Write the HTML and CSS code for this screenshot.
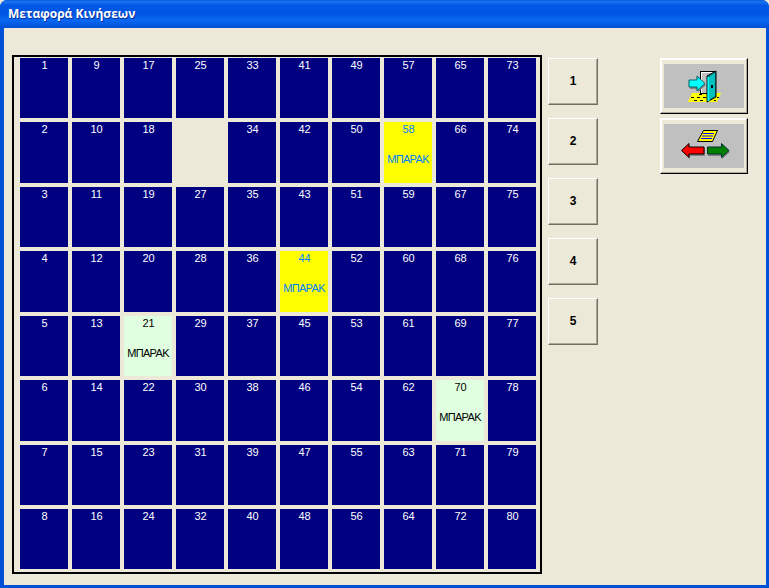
FILE: index.html
```html
<!DOCTYPE html>
<html lang="el">
<head>
    <meta charset="UTF-8">
    <meta name="viewport" content="width=device-width, initial-scale=1.0">
    <title>Μεταφορά Κινήσεων</title>
    <link rel="stylesheet" href="styles.css">
</head>
<body>
    <div class="window">
        <div class="titlebar">Μεταφορά Κινήσεων</div>

        <div class="client">
            <!-- Πλάνο τραπεζιών -->
            <div class="board">
                <div class="cell">1</div><div class="cell">2</div><div class="cell">3</div><div class="cell">4</div>
                <div class="cell">5</div><div class="cell">6</div><div class="cell">7</div><div class="cell">8</div>
                <div class="cell">9</div><div class="cell">10</div><div class="cell">11</div><div class="cell">12</div>
                <div class="cell">13</div><div class="cell">14</div><div class="cell">15</div><div class="cell">16</div>
                <div class="cell">17</div><div class="cell">18</div><div class="cell">19</div><div class="cell">20</div>
                <div class="cell open">21<span class="label">ΜΠΑΡΑΚ</span></div><div class="cell">22</div><div class="cell">23</div><div class="cell">24</div>
                <div class="cell">25</div><div class="cell empty"></div><div class="cell">27</div><div class="cell">28</div>
                <div class="cell">29</div><div class="cell">30</div><div class="cell">31</div><div class="cell">32</div>
                <div class="cell">33</div><div class="cell">34</div><div class="cell">35</div><div class="cell">36</div>
                <div class="cell">37</div><div class="cell">38</div><div class="cell">39</div><div class="cell">40</div>
                <div class="cell">41</div><div class="cell">42</div><div class="cell">43</div><div class="cell busy">44<span class="label">ΜΠΑΡΑΚ</span></div>
                <div class="cell">45</div><div class="cell">46</div><div class="cell">47</div><div class="cell">48</div>
                <div class="cell">49</div><div class="cell">50</div><div class="cell">51</div><div class="cell">52</div>
                <div class="cell">53</div><div class="cell">54</div><div class="cell">55</div><div class="cell">56</div>
                <div class="cell">57</div><div class="cell busy">58<span class="label">ΜΠΑΡΑΚ</span></div><div class="cell">59</div><div class="cell">60</div>
                <div class="cell">61</div><div class="cell">62</div><div class="cell">63</div><div class="cell">64</div>
                <div class="cell">65</div><div class="cell">66</div><div class="cell">67</div><div class="cell">68</div>
                <div class="cell">69</div><div class="cell open">70<span class="label">ΜΠΑΡΑΚ</span></div><div class="cell">71</div><div class="cell">72</div>
                <div class="cell">73</div><div class="cell">74</div><div class="cell">75</div><div class="cell">76</div>
                <div class="cell">77</div><div class="cell">78</div><div class="cell">79</div><div class="cell">80</div>
            </div>

            <!-- Ομάδες -->
            <div class="groups">
                <button class="btn group">1</button>
                <button class="btn group">2</button>
                <button class="btn group">3</button>
                <button class="btn group">4</button>
                <button class="btn group">5</button>
            </div>

            <div class="actions">
                <button class="btn action">
                    <span class="face">
                        <svg width="80" height="44" viewBox="0 0 80 44">
                            <!-- δάπεδο -->
                            <polygon points="28,29 57,29 53,38 24,38" fill="#ffff00"/>
                            <path d="M27 33.500h3M33 33.500h3M39 33.500h3M30 36.500h3M36 36.500h3M53 33.500h2M50 36.500h2M35 30.500h3" stroke="#000" stroke-width="1"/>
                            <!-- κάσα -->
                            <rect x="36.500" y="7.500" width="14" height="22" fill="#c0c0c0" stroke="#000"/>
                            <rect x="37" y="8" width="13" height="1" fill="#fff"/>
                            <rect x="37" y="8" width="1" height="21" fill="#fff"/>
                            <!-- πόρτα -->
                            <polygon points="52,7 52,33 43,38 43,12" fill="#008080" stroke="#000"/>
                            <polygon points="51,9 51,32 46,35 46,12" fill="#00c0c0"/>
                            <rect x="43.500" y="13" width="2" height="24" fill="#00ffff"/>
                            <rect x="47" y="21" width="2" height="3" fill="#000"/>
                            <!-- βέλος -->
                            <polygon points="26,18 34,18 34,14 42,21 34,28 34,25 26,25" fill="#808080"/>
                            <polygon points="25,16 33,16 33,12 41,19.500 33,27 33,23 25,23" fill="#00ffff" stroke="#006060"/>
                        </svg>
                    </span>
                </button>
                <button class="btn action">
                    <span class="face">
                        <svg width="80" height="44" viewBox="0 0 80 44">
                            <!-- χαρτί -->
                            <polygon points="39.500,6.500 53.500,6.500 48.500,17.500 33.500,17.500" fill="#ffff00" stroke="#000"/>
                            <path d="M39 9.500h11M38 12h11M37 14.500h11" stroke="#0000ff" stroke-width="1"/>
                            <!-- βέλη -->
                            <polygon points="19,28 26,21 26,24 41,24 41,32 26,32 26,35" fill="#808080"/>
                            <polygon points="17.500,26.500 25,19.500 25,23 40,23 40,30 25,30 25,33.500" fill="#ff0000" stroke="#000"/>
                            <polygon points="44,24 58,24 58,21 66,28 58,35 58,32 44,32" fill="#808080"/>
                            <polygon points="43.500,23 57.500,23 57.500,19.500 65,26.500 57.500,33.500 57.500,30 43.500,30" fill="#008000" stroke="#003030"/>
                        </svg>
                    </span>
                </button>
            </div>
        </div>
    </div>
</body>
</html>
```

FILE: styles.css
```css
/* Reset */
* {
    margin: 0;
    padding: 0;
    box-sizing: border-box;
}

body {
    width: 769px;
    height: 588px;
    overflow: hidden;
    background: #ece9d8;
    font-family: "Liberation Sans", Arial, sans-serif;
}

/* Παράθυρο XP */
.window {
    display: flex;
    flex-direction: column;
    height: 588px;
    background: #0050d8;
    border-radius: 7px 7px 0 0;
    padding: 0 3px 3px 4px;
}

.titlebar {
    flex: none;
    height: 28px;
    margin: 0 -3px 0 -4px;
    padding: 0 0 2px 8px;
    display: flex;
    align-items: center;
    border-radius: 7px 7px 0 0;
    background: linear-gradient(180deg, #0a5ae0 0%, #1a74ee 6%, #0058e6 20%, #0056e2 50%, #0a68f2 72%, #0050d6 100%);
    color: #fff;
    font-family: "Open Sans", sans-serif;
    font-size: 12px;
    font-weight: bold;
    text-shadow: 1px 1px 0 #0a2f9c;
}

.client {
    flex: 1;
    display: flex;
    align-items: flex-start;
    background: #ece9d8;
    padding: 27px 0 0 8px;
}

/* Πλέγμα */
.board {
    flex: none;
    width: 530px;
    height: 519px;
    padding: 1px 4px 3px 6px;
    border: 2px solid #000;
    display: grid;
    grid-auto-flow: column;
    grid-template-rows: repeat(8, 60.43px);
    grid-template-columns: repeat(10, 48px);
    gap: 4px;
    align-content: start;
}

.cell {
    background: #000080;
    color: #fff;
    font-size: 11px;
    line-height: 13px;
    text-align: center;
    padding: 1px 0 0 1px;
}

.cell .label {
    display: block;
    margin: 17px 0 0 -1px;
    letter-spacing: -0.65px;
}

.cell.empty {
    background: transparent;
}

.cell.busy {
    background: #ffff00;
    color: #0080ff;
}

.cell.open {
    background: #e0ffe0;
    color: #000;
}

/* Κουμπιά */
.btn {
    display: block;
    background: #ece9d8;
    border: 1px solid;
    border-color: #fff #716f64 #716f64 #fff;
    box-shadow: inset -1px -1px 0 #aca899;
    color: #000;
    font-family: "Liberation Sans", sans-serif;
    font-weight: bold;
    cursor: pointer;
}

.groups {
    flex: none;
    display: flex;
    flex-direction: column;
    gap: 13px;
    margin: 3px 0 0 6px;
}

.group {
    width: 50px;
    height: 47px;
    padding-bottom: 2px;
    font-size: 12px;
}

.actions {
    flex: none;
    display: flex;
    flex-direction: column;
    gap: 4px;
    margin: 3px 0 0 62px;
}

.action {
    width: 88px;
    height: 56px;
    padding: 5px 3px;
    border-color: #fff #000 #000 #fff;
    box-shadow: inset -1px -1px 0 #aca899, inset 1px 1px 0 #fff;
}

.face {
    display: block;
    width: 80px;
    height: 44px;
    background: #c0c0c0;
}

.face svg {
    display: block;
}
```
